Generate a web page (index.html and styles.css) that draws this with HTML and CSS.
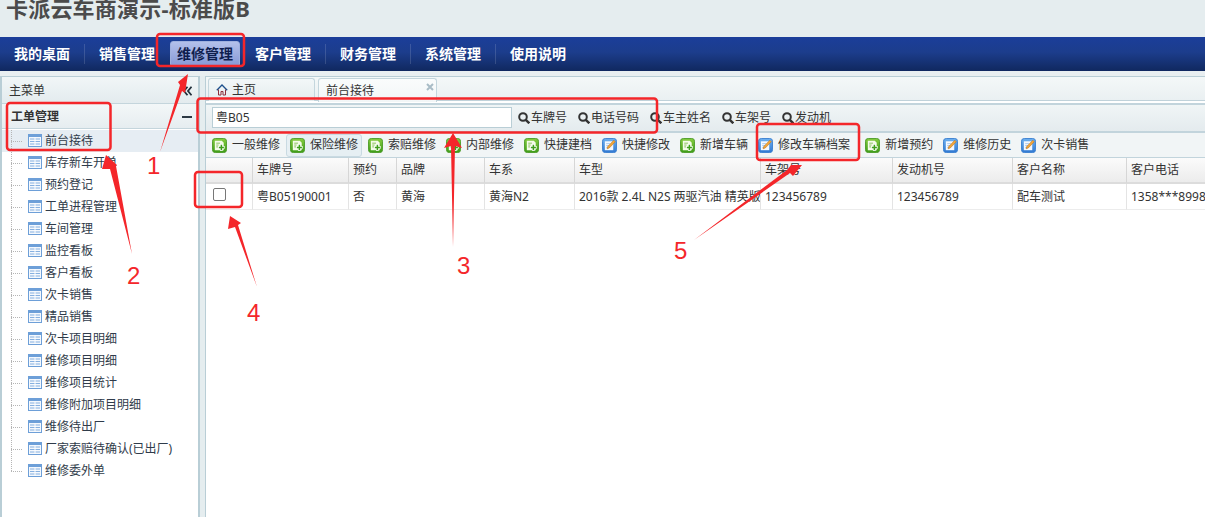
FILE: index.html
```html
<!DOCTYPE html>
<html lang="zh-CN">
<head>
<meta charset="utf-8">
<title>卡派云车商演示-标准版B</title>
<link rel="stylesheet" href="styles.css">
</head>
<body>
<svg class="defs" width="0" height="0">
  <defs>
    <linearGradient id="gg" x1="0" y1="0" x2="0" y2="1"><stop offset="0" stop-color="#86cc3f"/><stop offset="1" stop-color="#3d9c18"/></linearGradient>
    <linearGradient id="bg" x1="0" y1="0" x2="0" y2="1"><stop offset="0" stop-color="#6fb1f0"/><stop offset="1" stop-color="#2f78d2"/></linearGradient>
    <symbol id="i-add" viewBox="0 0 16 16">
      <rect x="0.5" y="0.500" width="15" height="15" rx="3" fill="url(#gg)" stroke="#4d9c2a"/>
      <path d="M3 3h7.500l2 2v8H3z" fill="#f4fbe9"/>
      <path d="M4.500 5.500h4M4.500 7.500h2.500M4.500 9.500h2" stroke="#78b84a" stroke-width=".9"/>
      <path d="M10 6.500v7M6.500 10h7" stroke="#fff" stroke-width="3"/>
      <path d="M10 7.300v5.400M7.300 10h5.400" stroke="#3f9e1c" stroke-width="1.600"/>
    </symbol>
    <symbol id="i-edit" viewBox="0 0 16 16">
      <rect x="0.500" y="0.500" width="15" height="15" rx="3" fill="url(#bg)" stroke="#3b80d0"/>
      <rect x="3" y="3.500" width="9" height="9.500" fill="#f5f9fe"/>
      <path d="M4.500 6h4M4.500 8h3M4.500 10h2" stroke="#9cc0e8" stroke-width=".9"/>
      <path d="M12.600 2.400l1.600 1.600-6.400 6.600-2.400.9.800-2.500z" fill="#f2a73a" stroke="#b8701c" stroke-width=".6"/>
    </symbol>
    <symbol id="i-table" viewBox="0 0 14 13">
      <rect x="0.500" y="0.500" width="13" height="12" fill="#f4f8fd" stroke="#6d9fd8"/>
      <path d="M0.500 1.500h13M0.500 2.500h13" stroke="#6d9fd8"/>
      <path d="M2 5h10M2 7.500h10M2 10h10" stroke="#86b0e0" stroke-width="1"/>
      <path d="M7 3.500v8" stroke="#fff" stroke-width="1"/>
    </symbol>
    <symbol id="i-search" viewBox="0 0 12 12">
      <circle cx="5" cy="5" r="3.800" fill="none" stroke="#333" stroke-width="2"/>
      <path d="M7.800 7.800L11.300 11.300" stroke="#333" stroke-width="2.400"/>
    </symbol>
  </defs>
</svg>

<header class="top">
  <h1 class="title">卡派云车商演示-标准版B</h1>
</header>

<nav class="nav">
  <a class="nav-item sep">我的桌面</a>
  <a class="nav-item">销售管理</a>
  <a class="nav-active">维修管理</a>
  <a class="nav-item sep">客户管理</a>
  <a class="nav-item sep">财务管理</a>
  <a class="nav-item sep">系统管理</a>
  <a class="nav-item">使用说明</a>
</nav>

<div class="main">
  <aside class="side">
    <div class="side-head">
      <span>主菜单</span>
      <svg class="chev" width="9" height="10" viewBox="0 0 9 10"><path d="M4.500 .7L1 5l3.500 4.300M8.500 .7L5 5l3.500 4.300" fill="none" stroke="#22303c" stroke-width="1.800"/></svg>
    </div>
    <div class="side-group">
      <span>工单管理</span>
      <span class="minus"></span>
    </div>
    <ul class="tree">
      <li class="tree-row selected"><span class="conn"></span><svg class="t-ic"><use href="#i-table"/></svg>前台接待</li>
      <li class="tree-row"><span class="conn"></span><svg class="t-ic"><use href="#i-table"/></svg>库存新车开单</li>
      <li class="tree-row"><span class="conn"></span><svg class="t-ic"><use href="#i-table"/></svg>预约登记</li>
      <li class="tree-row"><span class="conn"></span><svg class="t-ic"><use href="#i-table"/></svg>工单进程管理</li>
      <li class="tree-row"><span class="conn"></span><svg class="t-ic"><use href="#i-table"/></svg>车间管理</li>
      <li class="tree-row"><span class="conn"></span><svg class="t-ic"><use href="#i-table"/></svg>监控看板</li>
      <li class="tree-row"><span class="conn"></span><svg class="t-ic"><use href="#i-table"/></svg>客户看板</li>
      <li class="tree-row"><span class="conn"></span><svg class="t-ic"><use href="#i-table"/></svg>次卡销售</li>
      <li class="tree-row"><span class="conn"></span><svg class="t-ic"><use href="#i-table"/></svg>精品销售</li>
      <li class="tree-row"><span class="conn"></span><svg class="t-ic"><use href="#i-table"/></svg>次卡项目明细</li>
      <li class="tree-row"><span class="conn"></span><svg class="t-ic"><use href="#i-table"/></svg>维修项目明细</li>
      <li class="tree-row"><span class="conn"></span><svg class="t-ic"><use href="#i-table"/></svg>维修项目统计</li>
      <li class="tree-row"><span class="conn"></span><svg class="t-ic"><use href="#i-table"/></svg>维修附加项目明细</li>
      <li class="tree-row"><span class="conn"></span><svg class="t-ic"><use href="#i-table"/></svg>维修待出厂</li>
      <li class="tree-row"><span class="conn"></span><svg class="t-ic"><use href="#i-table"/></svg>厂家索赔待确认(已出厂)</li>
      <li class="tree-row last"><span class="conn"></span><svg class="t-ic"><use href="#i-table"/></svg>维修委外单</li>
    </ul>
  </aside>

  <div class="splitter"></div>

  <section class="content">
    <div class="tabs">
      <div class="tab tab-home">
        <svg class="home" width="12" height="12" viewBox="0 0 12 12"><path d="M0.800 6.200L6 1l5.200 5.200" fill="none" stroke="#1c4f8c" stroke-width="1.300"/><path d="M2.500 5.500V11h2.500V7.500h2V11h2.500V5.500" fill="none" stroke="#8c2f3a" stroke-width="1"/></svg>
        <span>主页</span>
      </div>
      <div class="tab tab-active">
        <span>前台接待</span>
        <svg class="close" width="8" height="8" viewBox="0 0 8 8"><path d="M1 1l6 6M7 1L1 7" stroke="#a9bcc6" stroke-width="2"/></svg>
      </div>
    </div>

    <div class="search">
      <input class="search-input" type="text" value="粤B05">
      <a class="s-btn"><svg class="s-ic"><use href="#i-search"/></svg>车牌号</a>
      <a class="s-btn"><svg class="s-ic"><use href="#i-search"/></svg>电话号码</a>
      <a class="s-btn"><svg class="s-ic"><use href="#i-search"/></svg>车主姓名</a>
      <a class="s-btn"><svg class="s-ic"><use href="#i-search"/></svg>车架号</a>
      <a class="s-btn"><svg class="s-ic"><use href="#i-search"/></svg>发动机</a>
    </div>

    <div class="toolbar">
      <a class="t-btn"><svg class="b-ic"><use href="#i-add"/></svg>一般维修</a>
      <a class="t-btn hover"><svg class="b-ic"><use href="#i-add"/></svg>保险维修</a>
      <a class="t-btn"><svg class="b-ic"><use href="#i-add"/></svg>索赔维修</a>
      <a class="t-btn"><svg class="b-ic"><use href="#i-add"/></svg>内部维修</a>
      <a class="t-btn"><svg class="b-ic"><use href="#i-add"/></svg>快捷建档</a>
      <a class="t-btn"><svg class="b-ic"><use href="#i-edit"/></svg>快捷修改</a>
      <a class="t-btn"><svg class="b-ic"><use href="#i-add"/></svg>新增车辆</a>
      <a class="t-btn wide"><svg class="b-ic"><use href="#i-edit"/></svg>修改车辆档案</a>
      <a class="t-btn"><svg class="b-ic"><use href="#i-add"/></svg>新增预约</a>
      <a class="t-btn"><svg class="b-ic"><use href="#i-edit"/></svg>维修历史</a>
      <a class="t-btn"><svg class="b-ic"><use href="#i-edit"/></svg>次卡销售</a>
    </div>

    <div class="grid grid-head">
      <div class="cell"></div>
      <div class="cell">车牌号</div>
      <div class="cell">预约</div>
      <div class="cell">品牌</div>
      <div class="cell">车系</div>
      <div class="cell">车型</div>
      <div class="cell">车架号</div>
      <div class="cell">发动机号</div>
      <div class="cell">客户名称</div>
      <div class="cell">客户电话</div>
    </div>
    <div class="grid grid-row">
      <div class="cell check"><span class="checkbox"></span></div>
      <div class="cell">粤B05190001</div>
      <div class="cell">否</div>
      <div class="cell">黄海</div>
      <div class="cell">黄海N2</div>
      <div class="cell">2016款 2.4L N2S 两驱汽油 精英版</div>
      <div class="cell">123456789</div>
      <div class="cell">123456789</div>
      <div class="cell">配车测试</div>
      <div class="cell">1358***8998</div>
    </div>
  </section>
</div>

<svg class="marks" width="1205" height="517" viewBox="0 0 1205 517">
  <g fill="none" stroke="#f4262a" stroke-width="2.500">
    <rect x="157" y="34" width="87" height="32" rx="3"/>
    <rect x="7" y="103" width="103.500" height="47" rx="3"/>
    <rect x="197.500" y="98.500" width="459.500" height="34" rx="3"/>
    <rect x="195" y="172" width="47" height="35" rx="3"/>
    <rect x="757" y="124" width="102" height="36" rx="3"/>
  </g>
  <g fill="#f4262a">
    <polygon points="160,152 180,85 178,82 188,74 185,93 182,91"/>
    <polygon points="132,254 110,169 102,169 106,155 117,165 116,166"/>
    <polygon points="453,247 451,146 444,148 453,133 462,148 455,146"/>
    <polygon points="257,287 235,227 228,229 230,216 241,223 238,225"/>
    <polygon points="694,240 787,170 791,165 802,165 793,176 790,173"/>
  </g>
  <g class="mark-num">
    <text x="147" y="174">1</text>
    <text x="127" y="284">2</text>
    <text x="457" y="274">3</text>
    <text x="247" y="321">4</text>
    <text x="674" y="259">5</text>
  </g>
</svg>
</body>
</html>
```

FILE: styles.css
```css
* { box-sizing: border-box; }
html, body { margin: 0; padding: 0; height: 100%; }
body {
  width: 1205px;
  height: 517px;
  overflow: hidden;
  position: relative;
  background: #fff;
  color: #333;
  font: 12px/20px "Noto Sans", "Noto Sans CJK SC", sans-serif;
}
.defs { position: absolute; }

.top { height: 37px; background: #e5edef; }
.title {
  margin: 0;
  padding-left: 6px;
  font-size: 22px;
  line-height: 16px;
  font-weight: 700;
  letter-spacing: .2px;
  color: #4b4b4b;
}

.nav {
  height: 34px;
  display: flex;
  align-items: center;
  background: linear-gradient(#1b3e9a, #1c3d8c 45%, #10285f);
  color: #fff;
  font-size: 14px;
  font-weight: 700;
  line-height: 20px;
}
.nav-item {
  width: 85px;
  padding-left: 14px;
  white-space: nowrap;
}
.nav-item.sep { box-shadow: inset -1px 0 0 rgba(255,255,255,.14); }
.nav-active {
  width: 70px;
  height: 26px;
  margin-right: 1px;
  padding-left: 6px;
  line-height: 24px;
  white-space: nowrap;
  color: #0f1e4f;
  background: linear-gradient(#b3c0ea, #8698d6);
  border: 1px solid #9fb0de;
  border-radius: 3px;
}

.main {
  display: flex;
  height: 446px;
  background: #e9eff1;
  padding-top: 5px;
}

.side {
  width: 200px;
  background: #fff;
  border: 1px solid #b9ced6;
  border-left-width: 2px;
  border-right-width: 2px;
  border-bottom: 0;
}
.side-head {
  height: 27px;
  display: flex;
  align-items: center;
  justify-content: space-between;
  padding: 2px 6px 0 7px;
  background: linear-gradient(#f1f6f7, #e3ebee);
  border-bottom: 1px solid #c4d5dc;
}
.side-group {
  height: 25px;
  display: flex;
  align-items: center;
  justify-content: space-between;
  padding: 2px 6px 0 9px;
  font-weight: 700;
  background: linear-gradient(#f3f7f8, #e6edf0);
  border-bottom: 1px solid #c4d5dc;
}
.minus { width: 10px; height: 2px; background: #2d3a44; }

.tree { list-style: none; margin: 0; padding: 1px 0 0; }
.tree-row {
  height: 22px;
  padding-left: 9px;
  display: flex;
  align-items: center;
  white-space: nowrap;
  color: #2f3b4a;
}
.tree-row.selected { background: #e6edf3; }
.conn {
  width: 17px;
  height: 22px;
  flex: none;
  background-image:
    repeating-linear-gradient(to bottom, #b5b5b5 0 1px, transparent 1px 2px),
    repeating-linear-gradient(to right, #b5b5b5 0 1px, transparent 1px 2px);
  background-size: 1px 100%, 12px 1px;
  background-position: 0 0, 0 50%;
  background-repeat: no-repeat;
}
.tree-row.last .conn { background-size: 1px 50%, 12px 1px; }
.t-ic { width: 14px; height: 13px; flex: none; margin-right: 3px; transform: translateY(-1px); }

.splitter { width: 5px; flex: none; background: #e5edef; }

.content {
  flex: 1;
  min-width: 0;
  background: #fff;
  border-left: 1px solid #b9ced6;
  border-top: 1px solid #b9ced6;
  overflow: hidden;
}

.tabs {
  height: 24px;
  display: flex;
  gap: 3px;
  padding: 1px 0 0 2px;
  background: linear-gradient(#f4f8f8, #eaf0f2);
  border-bottom: 1px solid #c0d2da;
}
.tab {
  height: 23px;
  display: flex;
  align-items: center;
  border: 1px solid #c4d6dd;
  border-bottom: 0;
  border-radius: 3px 3px 0 0;
  background: linear-gradient(#f3f7f8, #e4ecee);
  padding-left: 7px;
}
.tab-home { width: 107px; }
.tab-active {
  width: 119px;
  height: 24px;
  justify-content: space-between;
  background: linear-gradient(#fafcfc, #f2f6f7);
  padding: 0 2px 0 7px;
}
.home { margin-right: 4px; }
.close { align-self: flex-start; margin-top: 4px; }

.search {
  margin-top: 2px;
  height: 30px;
  display: flex;
  align-items: center;
  padding-left: 6px;
  background: linear-gradient(#f0f5f6, #e4ebee);
  border-top: 2px solid #c2d4dc;
  border-bottom: 2px solid #c2d4dc;
}
.search-input {
  width: 300px;
  height: 21px;
  margin: 0 6px 2px 0;
  padding: 0 3px;
  border: 1px solid #b9ced6;
  background: #fff;
  color: #333;
  font: 12px/20px "Noto Sans", "Noto Sans CJK SC", sans-serif;
}
.s-btn {
  display: flex;
  align-items: center;
  margin-right: 11px;
  white-space: nowrap;
}
.s-ic { width: 12px; height: 12px; margin-right: 1px; flex: none; }

.toolbar {
  height: 25px;
  display: flex;
  align-items: center;
  padding-left: 1px;
  background: #f1f5f6;
  border-bottom: 1px solid #c2d4dc;
}
.t-btn {
  height: 23px;
  display: flex;
  align-items: center;
  margin: 0 1px;
  padding: 0 3px;
  border: 1px solid transparent;
  border-radius: 3px;
  white-space: nowrap;
}
.t-btn.hover { background: #e6eff3; border-color: #c9dae2; }
.t-btn.wide { margin-right: 6px; }
.b-ic { width: 15px; height: 15px; margin-right: 5px; flex: none; }

.grid {
  display: grid;
  grid-template-columns: 47px 96px 48px 88px 90px 186px 132px 120px 114px 120px;
}
.cell {
  padding-left: 4px;
  overflow: hidden;
  white-space: nowrap;
  border-right: 1px solid #e4e4e4;
}
.grid-head { height: 26px; }
.grid-head .cell {
  line-height: 24px;
  background: linear-gradient(#fbfbfb, #ececec);
  border-bottom: 2px solid #dcdcdc;
  border-right-color: #d6d6d6;
}
.grid-row { height: 26px; }
.grid-row .cell {
  line-height: 25px;
  border-bottom: 1px solid #ececec;
}
.check {
  display: flex;
  align-items: center;
  padding-left: 7px;
  padding-bottom: 5px;
}
.checkbox {
  width: 13px;
  height: 13px;
  border: 1px solid #777;
  border-radius: 2px;
  background: #fff;
}

.marks { position: absolute; left: 0; top: 0; pointer-events: none; }
.mark-num text {
  font-family: "Liberation Sans", sans-serif;
  font-size: 24px;
  fill: #f4262a;
}
```
